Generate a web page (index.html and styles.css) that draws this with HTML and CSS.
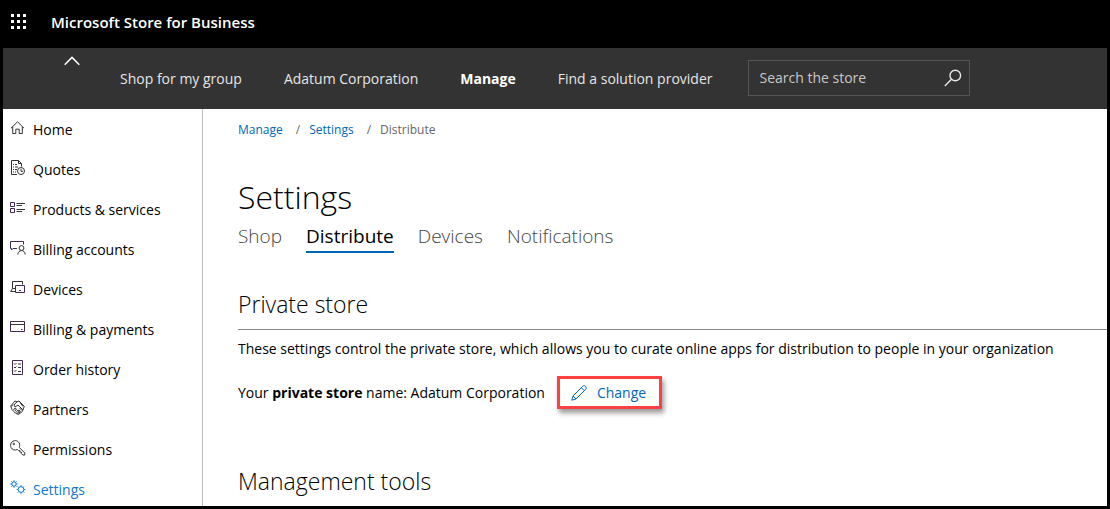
FILE: index.html
```html
<!DOCTYPE html>
<html lang="en">
<head>
<meta charset="utf-8">
<title>Microsoft Store for Business</title>
<link rel="stylesheet" href="styles.css">
</head>
<body>
<header class="suite-bar">
  <button class="launcher" type="button" aria-label="App launcher">
    <svg width="16" height="16" viewBox="0 0 16 16" fill="#fff"><path d="M0 0h3v3H0zM6 0h3v3H6zM12 0h3v3h-3zM0 6h3v3H0zM6 6h3v3H6zM12 6h3v3h-3zM0 12h3v3H0zM6 12h3v3H6zM12 12h3v3h-3z"/></svg>
  </button>
  <span class="suite-title">Microsoft Store for Business</span>
</header>
<div class="store-bar">
  <button class="collapse" type="button" aria-label="Collapse menu">
    <svg width="16" height="10" viewBox="0 0 16 10" fill="none" stroke="#fff" stroke-width="1.5"><path d="M.7 8.700 8 1.400l7.300 7.300"/></svg>
  </button>
  <nav class="store-nav" aria-label="Store">
    <a href="#">Shop for my group</a>
    <a href="#">Adatum Corporation</a>
    <a href="#" class="current">Manage</a>
    <a href="#">Find a solution provider</a>
  </nav>
  <form class="search">
    <input type="text" placeholder="Search the store" aria-label="Search the store">
    <button type="button" aria-label="Search">
      <svg width="18" height="18" viewBox="0 0 18 18" fill="none" stroke="#e8e8e8" stroke-width="1.4"><circle cx="11.3" cy="6.5" r="5.3"/><path d="M7.500 10.300.8 17"/></svg>
    </button>
  </form>
</div>
<div class="body">
  <nav class="side-nav" aria-label="Manage">
    <a href="#"><svg class="icon" viewBox="0 0 16 16"><path d="M1 8.200 7.500 1.800 14 8.200M2.700 6.800v6.700h3.100V9.200h3.400v4.300h3.100V6.800"/></svg>Home</a>
    <a href="#"><svg class="icon" viewBox="0 0 16 16"><path d="M7 14.500H1.500V.5h7l3 3v3M8.500.5v3h3M3 4.500h1M5 4.500h2M3 7h1M5 7h3M3 9.500h1M5 9.500h2M3 12h1M5 12h1"/><circle cx="11" cy="11" r="3.500"/><path d="M11 8.800V11.300h2"/></svg>Quotes</a>
    <a href="#"><svg class="icon" viewBox="0 0 16 16"><path class="accent" d="M.5 2.500h4v4h-4zM.5 8.500h4v4h-4z"/><path d="M6.500 3.500H15M6.500 5.500H12M6.500 9.500H15M6.500 11.500H12"/></svg>Products &amp; services</a>
    <a href="#"><svg class="icon" viewBox="0 0 16 16"><path class="accent" d="M7 8.500H3L1.500 10V8.500H.5v-7h13v3"/><circle cx="11.500" cy="8" r="2.400"/><path d="M7.800 14.500c.2-5.200 7.200-5.200 7.400 0"/></svg>Billing accounts</a>
    <a href="#"><svg class="icon" viewBox="0 0 16 16"><path d="M2.500 8.500v-7h10v3M2.500 8.500.7 11.500h5M2.500 8.500h3"/><path class="accent" d="M5.500 5.500h9v7h-9zM9 10.500h2"/></svg>Devices</a>
    <a href="#"><svg class="icon" viewBox="0 0 16 16"><path class="accent" d="M.5 1.500h14v10H.5z"/><path d="M.5 4.500h14M11 9.500h1.500"/></svg>Billing &amp; payments</a>
    <a href="#"><svg class="icon" viewBox="0 0 16 16"><path class="accent" d="M2.500.5h10v14h-10z"/><path d="m4 3.500 1 1L6.500 3M8 4h3M4 7l1 1 1.500-1.500M8 7.500h3M4 10.500l1 1L6.500 10M8 11.500h3"/></svg>Order history</a>
    <a href="#"><svg class="icon" viewBox="0 0 16 16"><path d="M.7 6 5 1l2 .8L9 1l5.300 5.300-2 5.200-4 3-3-1.500L2 9.500zM7 1.800 4 5l1 2 3-2 5 5M3 4.500 1.500 6.500M10 2.500l3 4M3.500 10 5 8l1.500 1L5 11M6 12.500l2-2.500 1.200 1-2 2.500M8 13.500l2-1.500M10.500 12l-1.500-2M12 10.500 9.500 8"/></svg>Partners</a>
    <a href="#"><svg class="icon" viewBox="0 0 16 16"><path d="M9.300 7.500C10.500 4.500 9.300 1 5.500.6 1.700.6-.4 4.500 1 7.500 2.300 10 5 10.600 7.300 9.500l1.200 1h1.300v1.500h1.500v1.500l1.500 1.500h2v-2z"/><circle cx="3.800" cy="4" r=".8"/></svg>Permissions</a>
    <a href="#" class="selected"><svg class="icon" viewBox="0 0 16 16"><circle cx="4" cy="4" r="2.200"/><path d="M4 .3v1.500M4 6.200v1.500M.3 4h1.500M6.200 4h1.500M1.400 1.400l1 1M5.600 5.600l1 1M6.600 1.400l-1 1M2.400 5.600l-1 1"/><circle cx="11" cy="9.500" r="2.900"/><path d="M11 5.200v1.400M11 12.400v1.400M6.700 9.500h1.400M13.900 9.500h1.400M8 6.500l1 1M13 11.500l1 1M14 6.500l-1 1M9 11.500l-1 1"/></svg>Settings</a>
  </nav>
  <main class="content">
    <nav class="crumbs" aria-label="Breadcrumb">
      <a href="#">Manage</a><span class="slash">/</span><a href="#">Settings</a><span class="slash">/</span><span>Distribute</span>
    </nav>
    <h1>Settings</h1>
    <nav class="tabs" aria-label="Settings">
      <a href="#">Shop</a>
      <a href="#" class="active">Distribute</a>
      <a href="#">Devices</a>
      <a href="#">Notifications</a>
    </nav>
    <section>
      <h2 class="ruled">Private store</h2>
      <p>These settings control the private store, which allows you to curate online apps for distribution to people in your organization</p>
      <div class="store-name">
        <p>Your <strong>private store</strong> name: Adatum Corporation</p>
        <button class="change" type="button">
          <svg width="16" height="16" viewBox="0 0 16 16" fill="none" stroke="currentColor"><path d="M.8 15.200 2 11 11.800 1.200c1.800-1.500 4.500 1 3 3L5 14zM10.300 2.700l3 3M2 11l3 3"/></svg>
          Change
        </button>
      </div>
    </section>
    <section>
      <h2>Management tools</h2>
    </section>
  </main>
</div>
</body>
</html>
```
FILE: styles.css
```css
* { box-sizing: border-box; }
body {
  margin: 0;
  height: 100vh;
  display: flex;
  flex-direction: column;
  overflow: hidden;
  border: 3px solid #000;
  background: #fff;
  color: #000;
  font: 14px/20px "Open Sans", "Noto Sans", sans-serif;
}
a { color: inherit; text-decoration: none; }
h1, h2, p { margin: 0; }
button { padding: 0; border: 0; background: none; font: inherit; color: inherit; cursor: pointer; }
svg { display: block; flex: none; }

.suite-bar {
  flex: none;
  display: flex;
  align-items: center;
  gap: 24px;
  height: 45px;
  padding: 0 8px 8px;
  background: #000;
  color: #fff;
}
.suite-title { font-size: 15px; font-weight: 600; }

.store-bar {
  flex: none;
  display: flex;
  align-items: center;
  height: 61px;
  padding-left: 61px;
  background: #333;
  color: #e6e6e6;
}
.collapse { align-self: flex-start; margin: 8px 40px 0 0; }
.store-nav { display: flex; gap: 42px; white-space: nowrap; }
.store-nav .current { color: #fff; font-weight: 700; }
.search {
  display: flex;
  align-items: center;
  width: 222px;
  height: 36px;
  margin: 0 0 2px 36px;
  padding: 0 7px 0 10px;
  border: 1px solid #555;
}
.search input {
  flex: 1;
  min-width: 0;
  padding: 0;
  border: 0;
  outline: 0;
  background: none;
  color: #fff;
  font: inherit;
}
.search input::placeholder { color: #c8c8c8; opacity: 1; }

.body { flex: 1; min-height: 0; display: flex; }
.side-nav { flex: none; width: 200px; border-right: 1px solid #bbb; }
.side-nav a { display: flex; align-items: center; gap: 7px; height: 40px; padding: 2px 0 0 7px; }
.icon { width: 16px; height: 16px; margin-bottom: 5px; fill: none; stroke: #333; }
.icon .accent { stroke: #402850; }
.side-nav .selected { color: #1078d0; }
.selected .icon { stroke: #1078d0; }

.content { flex: 1; min-width: 0; padding: 11px 0 0 35px; }
.crumbs { display: flex; font-size: 12px; color: #666; }
.crumbs a { color: #0067b8; }
.slash { padding: 0 9px 0 13px; }
h1 { margin-top: 35px; font-size: 32px; line-height: 44px; font-weight: 300; }
.tabs { display: flex; gap: 24px; margin-top: 3px; font-size: 19px; line-height: 28px; font-weight: 300; color: #444; }
.tabs a { padding-bottom: 1px; border-bottom: 2px solid transparent; }
.tabs .active { color: #000; border-color: #0067b8; font-weight: 400; }
h2 { margin-top: 35px; font-size: 23px; line-height: 32px; font-weight: 300; }
.ruled { padding-bottom: 9px; margin-bottom: 9px; border-bottom: 1px solid #888; }
.store-name { display: flex; align-items: center; gap: 12px; margin-top: 17px; }
.change {
  display: flex;
  align-items: center;
  gap: 10px;
  height: 33px;
  padding: 0 13px 0 11px;
  border: 3px solid #f94144;
  box-shadow: 2px 4px 5px rgba(0, 0, 0, .4);
  color: #0067b8;
}
section + section h2 { margin-top: 56px; }
```
